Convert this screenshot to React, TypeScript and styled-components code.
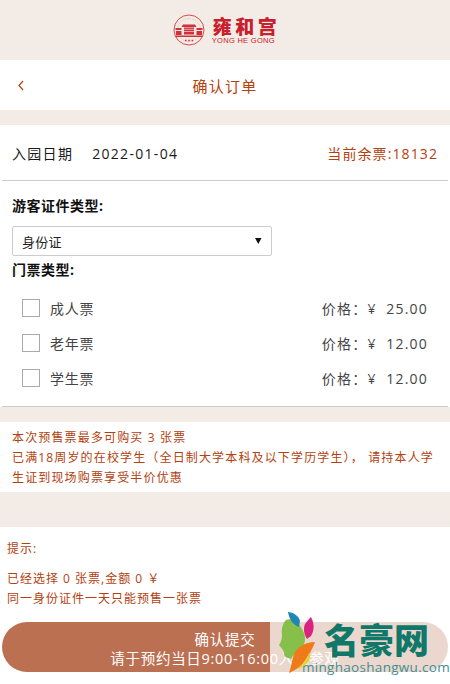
import React from 'react';
import styled, { createGlobalStyle } from 'styled-components';

const GlobalStyle = createGlobalStyle`
    html, body {
        margin: 0;
        padding: 0;
        background: #fff;
    }
    body {
        font-family: "Open Sans", "Noto Sans CJK SC", sans-serif;
        font-size: 14px;
        color: #222;
    }
    * {
        box-sizing: border-box;
    }
`;

const Page = styled.div`
    position: relative;
    width: 450px;
    height: 684px;
    overflow: hidden;
    background: #f3ebe5;
`;

const Top = styled.header`
    height: 60px;
    display: flex;
    align-items: center;
    justify-content: center;
    gap: 7px;
    padding-left: 3px;
`;

const LogoWords = styled.div`
    display: flex;
    flex-direction: column;
    align-items: flex-start;
    color: #c8202c;
`;

const LogoName = styled.div`
    font-family: "Noto Sans CJK SC", sans-serif;
    font-weight: 900;
    font-size: 19px;
    line-height: 21px;
    letter-spacing: 3.5px;
    margin-left: 1px;
    white-space: nowrap;
`;

const LogoLatin = styled.div`
    font-family: "Liberation Sans", sans-serif;
    font-size: 7.5px;
    line-height: 9px;
    letter-spacing: 0.3px;
    white-space: nowrap;
`;

const NavBar = styled.nav`
    height: 50px;
    background: #fff;
    display: flex;
    align-items: center;
    justify-content: center;
    position: relative;
    font-size: 15px;
    letter-spacing: 1.3px;
    color: #b2410f;
`;

const Back = styled.svg`
    position: absolute;
    left: 17px;
    top: 20px;
`;

const OrderCard = styled.section`
    margin-top: 15px;
    height: 282px;
    background: #fff;
    padding: 0 2px;
    display: flex;
    flex-direction: column;
`;

const DateRow = styled.div`
    height: 56px;
    flex: none;
    display: flex;
    align-items: center;
    justify-content: space-between;
    padding: 0 10px;
    border-bottom: 1px solid #ccc;
    font-size: 14px;
    letter-spacing: 1.3px;
    color: #1a1a1a;
`;

const DateLabel = styled.span`
    margin-right: 19px;
`;

const Remaining = styled.span`
    color: #b2410f;
    letter-spacing: 1.1px;
`;

const Fields = styled.div`
    flex: 1;
    padding: 15px 10px 0;
    border-bottom: 1px solid #ccc;
`;

const FieldTitle = styled.div`
    font-weight: 700;
    font-size: 14px;
    line-height: 20px;
    letter-spacing: 0.5px;
    color: #111;
`;

const IdSelect = styled.div`
    width: 260px;
    height: 30px;
    margin: 10px 0 4px;
    padding: 1px 9px 0;
    border: 1px solid #ccc;
    border-radius: 2px;
    display: flex;
    align-items: center;
    justify-content: space-between;
    font-size: 13px;
    letter-spacing: 0.3px;
    color: #222;
`;

const Caret = styled.svg`
    margin-right: -1px;
`;

const TicketList = styled.ul`
    list-style: none;
    margin: 19px 0 0;
    padding: 0;
    display: flex;
    flex-direction: column;
    gap: 17px;
`;

const Ticket = styled.li`
    height: 18px;
    padding: 0 0 0 10px;
    display: flex;
    align-items: center;
    gap: 10px;
    font-size: 14px;
    letter-spacing: 0.8px;
    color: #444;
`;

const Check = styled.span`
    width: 18px;
    height: 18px;
    border: 1px solid #aaa;
    background: #fff;
`;

const Price = styled.span`
    margin-left: auto;
    margin-right: 10px;
    letter-spacing: 1.2px;
    color: #444;
`;

const Notice = styled.section`
    margin-top: 15px;
    height: 70px;
    padding: 6px 10px 0 12px;
    background: #fff;
    font-size: 12px;
    line-height: 20px;
    letter-spacing: 1.15px;
    color: #b2410f;
`;

const Summary = styled.section`
    margin-top: 35px;
    height: 157px;
    background: #fff;
    padding: 12px 2px 0;
    font-size: 12px;
    line-height: 20px;
    letter-spacing: 1px;
    color: #b2410f;
`;

const Tip = styled.div<{ $gap?: boolean }>`
    padding-left: 5px;
    margin-bottom: ${({ $gap }) => ($gap ? '10px' : '0')};
`;

const Submit = styled.button`
    display: block;
    width: 446px;
    height: 50px;
    margin-top: 13px;
    padding: 4px 0 0;
    border: 0;
    border-radius: 25px;
    background: #bc7052;
    color: #fff;
    font-family: inherit;
    font-size: 14.5px;
    line-height: 19px;
    letter-spacing: 0.7px;
    text-align: center;
`;

const Watermark = styled.aside`
    position: absolute;
    left: 270px;
    top: 609px;
    width: 180px;
    height: 75px;
    background: rgba(255, 255, 255, 0.72);
    color: #0f7868;
`;

const MarkName = styled.div`
    position: absolute;
    left: 54px;
    top: 6px;
    font-family: "Noto Sans CJK SC", sans-serif;
    font-weight: 900;
    font-size: 35px;
    line-height: 48px;
    white-space: nowrap;
`;

const MarkUrl = styled.div`
    position: absolute;
    left: 32px;
    top: 50px;
    font-family: "Open Sans", sans-serif;
    font-size: 13.5px;
    line-height: 16px;
    letter-spacing: 0.3px;
    color: #3f8f92;
    white-space: nowrap;
`;

const tickets = [
    { name: '成人票', price: '25.00' },
    { name: '老年票', price: '12.00' },
    { name: '学生票', price: '12.00' },
];

const Emblem = () => (
    <svg width="32" height="32" viewBox="0 0 32 32" fill="none">
        <circle cx="16" cy="16" r="15" stroke="#cf3a42" strokeWidth="0.9" />
        <circle cx="16" cy="16" r="11.500" stroke="#e9a9a9" strokeWidth="0.7" strokeDasharray="1.400 1.200" />
        <path d="M10 10.500h12l1.500 2.500H8.500z" fill="#d0303a" />
        <path d="M11 13.500h10v7H11z" fill="#d0303a" />
        <path d="M2.500 14h6v2h-6zM23.500 14h6v2h-6zM3 17h5.500v4H3zM23.500 17H29v4h-5.500z" fill="#d0303a" />
        <path d="M11 15.300h10M11 17.500h10" stroke="#f6d9d9" strokeWidth="0.7" />
        <path d="M2.500 21.500h27v1.500h-27z" fill="#d0303a" />
        <path d="M12 26.500h1.500M15.300 26.500h1.500M18.600 26.500h1.500" stroke="#d0303a" strokeWidth="1.300" />
    </svg>
);

const Leaf: React.FC<{ className?: string }> = ({ className }) => (
    <svg className={className} width="46" height="75" viewBox="0 0 46 75">
        <path d="M8 11C14 8 22 14 26 24C28 30 27 35 24 38C19 42 15 46 13 50L11 49C8 49 6 47 6 44L5 41L1 36C3 33 4 30 4 26C3 20 5 14 8 11z" fill="#86c04a" />
        <path d="M10 3C15 3 21 7 22 12L21 18C15 16 11 10 10 3z" fill="#1f86b5" />
        <path d="M33 8C36 14 37 20 33 27L29 30C26 25 25 20 27 15C29 12 31 10 33 8z" fill="#d9257f" />
        <path d="M37 33C28 33 20 37 16 45C14 52 13 58 11 64C18 61 24 57 28 50C32 44 35 39 37 33z" fill="#ee7a1a" />
        <path d="M31 44C29 50 25 57 18 60C22 60 27 57 30 53C32 50 33 47 31 44z" fill="#e3d32a" />
    </svg>
);

const StyledLeaf = styled(Leaf)`
    position: absolute;
    left: 8px;
    top: 0;
`;

const App: React.FC = () => {
    return (
        <Page>
            <GlobalStyle />
            <Top>
                <Emblem />
                <LogoWords>
                    <LogoName>雍和宫</LogoName>
                    <LogoLatin>YONG HE GONG</LogoLatin>
                </LogoWords>
            </Top>
            <NavBar>
                <Back width="8" height="11" viewBox="0 0 8 11" fill="none">
                    <path d="M6 1L2 5.500L6 10" stroke="#b2410f" strokeWidth="1.200" />
                </Back>
                确认订单
            </NavBar>
            <OrderCard>
                <DateRow>
                    <span>
                        <DateLabel>入园日期</DateLabel>2022-01-04
                    </span>
                    <Remaining>当前余票:18132</Remaining>
                </DateRow>
                <Fields>
                    <FieldTitle>游客证件类型:</FieldTitle>
                    <IdSelect>
                        身份证
                        <Caret width="8" height="7" viewBox="0 0 8 7">
                            <path d="M0 0h6.500L3.300 6z" fill="#111" />
                        </Caret>
                    </IdSelect>
                    <FieldTitle>门票类型:</FieldTitle>
                    <TicketList>
                        {tickets.map((t) => (
                            <Ticket key={t.name}>
                                <Check />
                                {t.name}
                                <Price>价格：¥ &nbsp;{t.price}</Price>
                            </Ticket>
                        ))}
                    </TicketList>
                </Fields>
            </OrderCard>
            <Notice>
                本次预售票最多可购买 3 张票
                <br />
                已满18周岁的在校学生（全日制大学本科及以下学历学生）， 请持本人学生证到现场购票享受半价优惠
            </Notice>
            <Summary>
                <Tip $gap>提示:</Tip>
                <Tip>已经选择 0 张票,金额 0 ￥</Tip>
                <Tip>同一身份证件一天只能预售一张票</Tip>
                <Submit type="button">
                    确认提交
                    <br />
                    请于预约当日9:00-16:00入园参观
                </Submit>
            </Summary>
            <Watermark>
                <MarkName>名豪网</MarkName>
                <MarkUrl>minghaoshangwu.com</MarkUrl>
                <StyledLeaf />
            </Watermark>
        </Page>
    );
};

export default App;
